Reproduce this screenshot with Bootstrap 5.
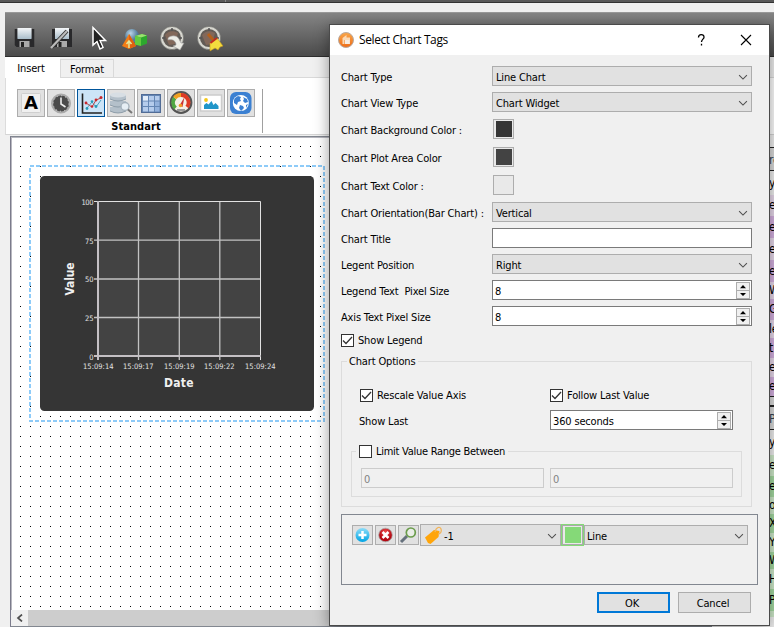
<!DOCTYPE html>
<html lang="en">
<head>
<meta charset="utf-8">
<title>Select Chart Tags</title>
<link href="https://cdn.jsdelivr.net/npm/bootstrap@5.3.0/dist/css/bootstrap.min.css" rel="stylesheet">
<style>
body{width:774px;height:627px;background:#f0f0f0;color:#000;font:11px/14px "DejaVu Sans Condensed","DejaVu Sans",sans-serif;font-stretch:condensed;letter-spacing:-.16px}
svg{display:block;flex:none}
.topstrip{height:3px;background:#595959;border-bottom:1px solid #333}
.topstrip i{width:1px;height:2px;margin-left:225px;background:#888}
.toolbar{height:45px;margin:9px 0 0 5px;background:linear-gradient(#858585,#4b4b4b);border-top:1px solid #999;border-bottom:1px solid #2e2e2e}
.toolbar svg{margin-top:1px}
.tabs{height:21px;margin-left:5px;border-bottom:1px solid #d9d9d9}
.tab-a{width:55px;height:21px;background:#fff;border:1px solid #fff;border-bottom:0;padding:4px 3px 0 0}
.tab-b{width:54px;height:19px;margin-top:2px;border:1px solid #d9d9d9;border-bottom:0;padding-top:3px}
.ribbon{height:57px;margin-left:5px;background:#fff;border-left:1px solid #dcdcdc;border-bottom:1px solid #d5d5d5}
.group{width:257px;height:44px;margin-top:11px;padding-left:11px;border-right:1px solid #a0a0a0}
.tool{width:28px;height:28px;background:#e1e1e1;border:1px solid #adadad}
.tool.on{background:#cce4f7;border-color:#00559b}
.caption{width:238px;height:14px;padding-top:3px;font-size:11px;letter-spacing:.08px}
.workspace{height:491px;margin-top:1px}
.canvas{width:702px;height:491px;margin-left:10px;border:1px solid #828790;border-left-color:#7b7b8b;background:#fff;box-shadow:inset 1px 1px #b8b8c0}
.sheet{height:472px;margin:1px 0 0 1px}
.hscroll{height:16px;background:#cdcdcd}
.hscroll span{width:17px;height:16px;background:#f0f0f0}
.props{width:20px;margin:11px 0 0 44px;font-size:12px}
.props div{padding-left:13px;overflow:hidden;white-space:nowrap}
.hd{background:#dcdcdc;border:1px solid #222;border-width:1px 0;color:#345}
.l1{background:#e8d9ec}.l2{background:#d5b1e1}.g1{background:#cfebcb}.g2{background:#a5dba2}
.dlg{left:329px;top:24px;width:441px;height:602px;background:#f0f0f0;border:1px solid #4a4a4a;box-shadow:0 3px 14px rgba(0,0,0,.4);padding:0}
.titlebar{height:30px;background:#fff;font:12px/16px "Open Sans","Noto Sans",sans-serif;letter-spacing:-.4px;padding-left:8px}
.titlebar .name{padding-left:5px}
.form{padding:11px 0 0 11px}
.fr{height:20px;margin-bottom:6px}
.fr.c{margin-bottom:8px}
.fr>label{width:151px;white-space:pre;padding-top:4px}
.combo,.spin,.edit{width:260px;height:20px;border:1px solid #adadad;background:#e1e1e1;padding:4px 0 0 3px}
.combo>svg:last-child{margin:-2px 3px 0 0}
.spin,.edit{background:#fff;border-color:#7a7a7a;padding-left:2px}
.off{background:#f0f0f0;border-color:#ccc;color:#838383;width:183px}
.sp{width:14px;height:17px;margin:-4px 1px 0 0;border:1px solid #adadad;background:#f0f0f0}
.sw{width:21px;height:20px;border:1px solid #adadad;background:#e9e9e9;margin-left:1px}
.sw i{width:16px;height:16px}
.k1{background:#353535}.k2{background:#434343}.k3{background:#e9e9e9}.k4{background:#85d978}
.cb{width:13px;height:13px;border:1px solid #333;background:#fff;flex:none}
.cb+span{margin-left:4px;padding-top:1px}
.legendrow{height:13px;margin-top:8px}
.crow{height:13px}
.opts{width:411px;height:146px;margin-top:14px;border:1px solid #dcdcdc}
.opts>.lg,.lim>.lg{background:#f0f0f0;width:max-content}
.opts>.lg{margin:-7px 0 0 5px;padding:0 3px 0 2px;height:14px}
.half{width:190px}
.lim{width:391px;height:46px;margin:21px 0 0 9px;border:1px solid #dcdcdc;letter-spacing:-.27px}
.lim>.lg{margin:-7px 0 0 4px;padding:0 3px;height:13px}
.tags{width:417px;height:71px;margin-top:7px;border:1px solid #828790;padding:9px 0 0 10px}
.tb{width:21px;height:20px;border:1px solid #adadad;background:#e1e1e1;margin:1px 2px 0 0}
.cbtn{width:23px;height:22px;border:1px solid #85d978;background:#e9e9e9;box-shadow:inset 0 0 0 1px #aaa}
.foot{margin:7px 18px 0 0;gap:8px}
.foot .btn{width:73px;height:21px;padding:2px 3px 0 0;font:inherit;letter-spacing:inherit;border:1px solid #adadad;background:#e1e1e1;border-radius:0;color:#000}
.foot .ok{border:2px solid #0078d7}
svg text{font-family:"DejaVu Sans Condensed","DejaVu Sans",sans-serif;font-stretch:condensed;letter-spacing:0}
</style>
<script src="https://cdn.jsdelivr.net/npm/bootstrap@5.3.0/dist/js/bootstrap.bundle.min.js"></script>
</head>
<body class="overflow-hidden position-relative">
<svg width="0" height="0" class="position-absolute">
<defs>
<linearGradient id="gm" x2="0" y2="1"><stop stop-color="#f4f6f8"/><stop offset="1" stop-color="#a9bdca"/></linearGradient>
<linearGradient id="gb" x2="0" y2="1"><stop stop-color="#8cdcf8"/><stop offset="1" stop-color="#00a4e4"/></linearGradient>
<linearGradient id="go" x2="0" y2="1"><stop stop-color="#f9a74a"/><stop offset="1" stop-color="#ee6c18"/></linearGradient>
<radialGradient id="gs" cx=".4" cy=".3"><stop stop-color="#b9d4e6"/><stop offset="1" stop-color="#527d9c"/></radialGradient>
<radialGradient id="gr" cx=".5" cy=".3"><stop stop-color="#f05050"/><stop offset="1" stop-color="#b40812"/></radialGradient>
<pattern id="dots" width="10" height="10" patternUnits="userSpaceOnUse" x="20" y="146"><rect width="1" height="1"/></pattern>
<symbol id="chev" viewBox="0 0 11 7"><path d="M1.2 1 5.5 5.2 9.8 1" fill="none" stroke="#505050" stroke-width="1.2"/></symbol>
<symbol id="tick" viewBox="0 0 11 11"><path d="M1 5.5 4 8.5 10 2" fill="none" stroke="#333" stroke-width="1.3"/></symbol>
<symbol id="updn" viewBox="0 0 12 15"><path d="M0 7.5H12" stroke="#adadad"/><path d="M3 5.2h6L6 2zM3 10h6L6 13z"/></symbol>
<symbol id="disk" viewBox="0 0 20 21"><path d="M0 2h3v9h14V2h3v18H2l-2-2z" fill="#29292b"/><path d="M3 1h14v11H3z" fill="url(#gm)"/><path d="M5 14h10v6H5z" fill="#aaa"/><path d="M6.500 15h3v5h-3z" fill="#222"/></symbol>
<symbol id="ring" viewBox="0 0 26 26"><circle cx="12" cy="12" r="10.300" fill="#625b55" stroke="#d7d7d0" stroke-width="2.500"/><circle cx="12" cy="12" r="11.600" fill="none" stroke="#73736f" stroke-width=".7"/><path d="M5 9c3-4 8-5 13-2l-3 11-6 1z" fill="#82685a"/><path d="M12 2v3M2 12h3M19 12h3" stroke="#555" stroke-width="1.500"/></symbol>
</defs></svg>

<div class="topstrip d-flex"><i></i></div>
<div class="toolbar d-flex">
 <svg width="300" height="42" viewBox="5 14 300 42">
  <use href="#disk" x="14.500" y="27" width="20" height="21"/>
  <use href="#disk" x="52" y="27" width="20" height="21"/>
  <path d="M52 47 67 31" stroke="#333" stroke-width="4"/><path d="M51 48 67 31" stroke="#bbb" stroke-width="2.200"/>
  <path d="M93 27.500v17.500l4-3.500 3 7.500 3-1.500-3-7h5.500z" fill="#222" stroke="#fff" stroke-width="1.500"/><path d="M94 30v13l3.500-3 3.500 7.500 1-.5-3.500-7.500h4z" fill="#222"/>
  <circle cx="132" cy="36" r="7" fill="url(#gs)"/><path d="m122 46 7-12 7 12-7 3z" fill="#f27d16"/><path d="m129 34 7 12-7 3z" fill="#e0600f"/><path d="M129 41v7m-2.500-4 2.500-3 2.500 3" stroke="#e4e79a" stroke-width="1.500" fill="none"/>
  <path d="m135 36 7-2 5 1.500v8l-6 2.500-6-1.500z" fill="#2da82e"/><path d="m135 36 7-2 5 1.500-6 2z" fill="#9be26f"/><path d="m135 36 6 1.500v8.500l-6-1.500z" fill="#63cb3e"/>
  <use href="#ring" x="160" y="26" width="26" height="26"/>
  <path d="M168 38c3-3 9-3 11 1l2 4h3l-4 7-7-4 3-1c0-4-3-6-8-5z" fill="#ecece6" stroke="#999" stroke-width=".6"/>
  <use href="#ring" x="197" y="26" width="26" height="26"/>
  <path d="m208 34 6 7" stroke="#b4601c" stroke-width="3"/><path d="m210 43 7-5 6 8-3 1-2 3-3-2-5 3z" fill="#f3dc3e" stroke="#c7971a" stroke-width=".6"/><path d="m210.500 43 6.500-5" stroke="#c22b20" stroke-width="1.800"/>
 </svg>
</div>
<div class="tabs d-flex"><div class="tab-a text-center">Insert</div><div class="tab-b text-center">Format</div></div>
<div class="ribbon d-flex">
 <div class="group">
  <div class="d-flex" style="gap:2px">
   <span class="tool d-flex align-items-center justify-content-center"><svg width="24" height="24"><rect x="2.500" y="2.500" width="19" height="19" rx="1" fill="#f0f0f0" stroke="#cfcfcf"/><text x="5" y="18" font-size="17" font-weight="bold" textLength="14" lengthAdjust="spacingAndGlyphs" style="font-family:'DejaVu Sans'">A</text></svg></span>
   <span class="tool d-flex align-items-center justify-content-center"><svg width="24" height="24"><circle cx="12" cy="12.500" r="9" fill="#4b4b4b" stroke="#aaa" stroke-width="2"/><circle cx="12" cy="12.500" r="7.800" fill="none" stroke="#ddd" stroke-dasharray="1 3.080"/><path d="M12 6.500V13l4.500 3" fill="none" stroke="#eee" stroke-width="1.600"/></svg></span>
   <span class="tool on d-flex align-items-center justify-content-center"><svg width="24" height="24"><path d="M3.500 2.500v19.500H23" fill="none" stroke="#222" stroke-width="1.600"/><path d="m8 17 5-6 4 5 5-7" fill="none" stroke="#48a4c0" stroke-width="1"/><path d="m7 12 6 4 4-7 5-2" fill="none" stroke="#b64a4e" stroke-width="1"/><g fill="#279bb8"><circle cx="8" cy="17.500" r="1.400"/><circle cx="17" cy="15.500" r="1.400"/><circle cx="13" cy="10.500" r="1.300"/></g><g fill="#c8282c"><circle cx="7" cy="12" r="1.400"/><circle cx="13" cy="15.500" r="1.300"/><circle cx="17" cy="9" r="1.400"/><circle cx="22" cy="6.500" r="1.500"/></g></svg></span>
   <span class="tool d-flex align-items-center justify-content-center"><svg width="26" height="26"><g fill="#b4c0ca"><path d="M2 5v4q8 4 16 0V5zM2 11v4q8 4 16 0v-4zM2 17v4q8 4 16 0v-4z"/></g><ellipse cx="10" cy="5" rx="8" ry="2.500" fill="#d7dee4"/><g fill="none" stroke="#7e8f9d" stroke-width=".8"><path d="M2 9q8 4 16 0M2 15q8 4 16 0M2 21q8 4 16 0"/></g><circle cx="17" cy="16.500" r="4" fill="#e6eef4" stroke="#a5b2bc" stroke-width="1.400"/><path d="m20 19.500 4 3.500" stroke="#777" stroke-width="2"/></svg></span>
   <span class="tool d-flex align-items-center justify-content-center"><svg width="24" height="24"><rect x="2.500" y="3.500" width="19" height="18" fill="#6486b4" stroke="#516c96"/><g fill="#b5ccec"><path d="M4 5h5v4.500H4zM10 5h5v4.500h-5zM16 5h4.500v4.500H16zM4 10.500h5v4.500H4zM10 10.500h5v4.500h-5zM4 16h5v4.500H4zM10 16h5v4.500h-5z"/></g><path d="M16 10.500h4.500V15H16zM16 16h4.500v4.500H16z" fill="#93b2dd"/><path d="M4 5h5v4.500H4z" fill="#e4eefa"/></svg></span>
   <span class="tool d-flex align-items-center justify-content-center"><svg width="26" height="26"><circle cx="13" cy="12.500" r="10.300" fill="#f4f0e6" stroke="#545454" stroke-width="2.200"/><path d="M7.500 18a7.500 7.500 0 0 1-.8-10" fill="none" stroke="#51a743" stroke-width="3.800"/><path d="M6.700 8a7.500 7.500 0 0 1 6.300-3" fill="none" stroke="#f0a020" stroke-width="3.800"/><path d="M13 5a7.500 7.500 0 0 1 6 12" fill="none" stroke="#dd3a24" stroke-width="3.800"/><path d="m11.500 15.500 5-8.500-2 10z" fill="#c33"/><circle cx="12.500" cy="15.500" r="1.800" fill="#f29b24"/><path d="M9 20h8" stroke="#999" stroke-width="2"/></svg></span>
   <span class="tool d-flex align-items-center justify-content-center"><svg width="24" height="24"><rect x="1.500" y="4" width="21" height="16" fill="#fff" stroke="#ccc" stroke-width="1.500"/><path d="M5 18v-4l2.500-2 2 1.500 3-3.500 2 4 2-2 3 3v3z" fill="#2196c9"/><circle cx="7" cy="9" r="1.900" fill="#f4c719"/></svg></span>
   <span class="tool d-flex align-items-center justify-content-center"><svg width="24" height="24"><rect x="1" y="1" width="21.500" height="22" rx="6" fill="#3b80d2"/><circle cx="11.800" cy="12" r="8" fill="#fff"/><path d="m6 7 3-2 3 1-1 2 1 2-3 1-1 3-3-2v-3zM14 6l4 2 1 3-3 1-2-2 1-2zM11 14l3 1 1 2-3 3-2-3zM17 14l2-1-2 4z" fill="#3b80d2"/></svg></span>
  </div>
  <div class="caption fw-bold text-center">Standart</div>
 </div>
</div>
<div class="workspace d-flex">
 <div class="canvas flex-shrink-0">
  <div class="sheet">
   <svg width="699" height="471" viewBox="12 138 699 471">
    <rect x="20" y="146" width="691" height="463" fill="url(#dots)"/>
    <rect x="30" y="166" width="294" height="255" fill="none" stroke="#8ecbf8" stroke-width="2" stroke-dasharray="4 2"/>
    <rect x="40" y="176" width="274" height="235" rx="4.500" fill="#353535"/>
    <rect x="98" y="201" width="163" height="155" fill="#434343"/>
    <g fill="none" stroke="#c2c2c2" stroke-width="1.300"><path d="M94 240.200H261M94 279H261M94 317.500H261M138.500 201V360M179.300 201V360M219.800 201V360"/></g>
    <path d="M94 201.500H260.500V360" fill="none" stroke="#e2e2e2"/><path d="M98 201v159M94 356H261" stroke="#c4c0c4" stroke-width="2"/>
    <g fill="#e2e2e2" font-size="7.500" text-anchor="end"><text x="93.500" y="205" textLength="12">100</text><text x="93.500" y="244">75</text><text x="93.500" y="282">50</text><text x="93.500" y="321">25</text><text x="93.500" y="360">0</text></g>
    <g fill="#e2e2e2" font-size="7.500"><text x="83" y="369" textLength="30.500">15:09:14</text><text x="123" y="369" textLength="30.500">15:09:17</text><text x="164" y="369" textLength="30.500">15:09:19</text><text x="204" y="369" textLength="30.500">15:09:22</text><text x="245" y="369" textLength="30.500">15:09:24</text></g>
    <g fill="#f0f0f0" font-size="12" font-weight="bold"><text x="164" y="387" textLength="29.500">Date</text><text transform="translate(74 295.500) rotate(-90)" textLength="33">Value</text></g>
   </svg>
  </div>
  <div class="hscroll"><span class="d-flex align-items-center justify-content-center"><svg width="8" height="8"><path d="M6 .5 2 4l4 3.500" fill="none" stroke="#505050" stroke-width="1.700"/></svg></span></div>
 </div>
 <div class="props flex-shrink-0" id="props"></div>
</div>

<div class="dlg position-absolute">
 <div class="titlebar d-flex align-items-center">
  <svg width="16" height="16"><circle cx="8" cy="8" r="7.500" fill="url(#go)" stroke="#b9aaa0"/><path d="M4.500 12V6l4-3v2.500h3.500V12h-2V8H6.500v4z" fill="#fbd9b4"/><path d="M7 8h4.500v4H7z" fill="#f6ece2"/></svg>
  <span class="name flex-grow-1">Select Chart Tags</span>
  <svg width="12" height="14" style="margin-right:32px"><path d="M2.500 4.500C2.500 2.500 3.500 1.600 5.200 1.600S8 2.600 8 4.200C8 6 5.500 6.500 5.500 9M5.500 10.800v1.700" fill="none" stroke="#000" stroke-width="1.300"/></svg>
  <svg width="12" height="12" style="margin-right:17px"><path d="m1 1 10 10M11 1 1 11" stroke="#000" stroke-width="1.100"/></svg>
 </div>
 <div class="form">
  <div class="fr d-flex align-items-center"><label>Chart Type</label><div class="combo d-flex align-items-center justify-content-between">Line Chart<svg width="10" height="7"><use href="#chev"/></svg></div></div>
  <div class="fr d-flex align-items-center" style="margin-bottom:7px"><label>Chart View Type</label><div class="combo d-flex align-items-center justify-content-between">Chart Widget<svg width="10" height="7"><use href="#chev"/></svg></div></div>
  <div class="fr c d-flex align-items-center"><label>Chart Background Color :</label><div class="sw d-flex align-items-center justify-content-center"><i class="k1"></i></div></div>
  <div class="fr c d-flex align-items-center"><label>Chart Plot Area Color</label><div class="sw d-flex align-items-center justify-content-center"><i class="k2"></i></div></div>
  <div class="fr c d-flex align-items-center" style="margin-bottom:7px"><label>Chart Text Color :</label><div class="sw d-flex align-items-center justify-content-center"><i class="k3"></i></div></div>
  <div class="fr d-flex align-items-center"><label>Chart Orientation(Bar Chart) :</label><div class="combo d-flex align-items-center justify-content-between">Vertical<svg width="10" height="7"><use href="#chev"/></svg></div></div>
  <div class="fr d-flex align-items-center"><label>Chart Title</label><div class="edit"></div></div>
  <div class="fr d-flex align-items-center"><label>Legent Position</label><div class="combo d-flex align-items-center justify-content-between">Right<svg width="10" height="7"><use href="#chev"/></svg></div></div>
  <div class="fr d-flex align-items-center"><label>Legend Text  Pixel Size</label><div class="spin d-flex align-items-center justify-content-between">8<span class="sp"><svg width="12" height="15"><use href="#updn"/></svg></span></div></div>
  <div class="fr d-flex align-items-center"><label>Axis Text Pixel Size</label><div class="spin d-flex align-items-center justify-content-between">8<span class="sp"><svg width="12" height="15"><use href="#updn"/></svg></span></div></div>
  <div class="legendrow d-flex align-items-center"><span class="cb"><svg width="11" height="11"><use href="#tick"/></svg></span><span>Show Legend</span></div>
  <div class="opts">
   <div class="lg">Chart Options</div>
   <div class="crow d-flex" style="margin:20px 0 0 18px">
    <div class="half d-flex align-items-center"><span class="cb"><svg width="11" height="11"><use href="#tick"/></svg></span><span>Rescale Value Axis</span></div>
    <div class="half d-flex align-items-center"><span class="cb"><svg width="11" height="11"><use href="#tick"/></svg></span><span>Follow Last Value</span></div>
   </div>
   <div class="d-flex align-items-center" style="margin:8px 0 0 17px">
    <span style="width:191px;padding-top:4px">Show Last</span><div class="spin d-flex align-items-center justify-content-between" style="width:183px">360 seconds<span class="sp"><svg width="12" height="15"><use href="#updn"/></svg></span></div>
   </div>
   <div class="lim">
    <div class="lg d-flex align-items-center"><span class="cb"></span><span>Limit Value Range Between</span></div>
    <div class="d-flex" style="margin:10px 0 0 9px;gap:6px"><div class="edit off d-flex align-items-center">0</div><div class="edit off d-flex align-items-center">0</div></div>
   </div>
  </div>
  <div class="tags d-flex align-items-start">
   <span class="tb"><svg width="19" height="18"><circle cx="9.500" cy="9" r="7" fill="url(#gb)"/><path d="M9.500 5v8M5.500 9h8" stroke="#fff" stroke-width="2.500"/></svg></span>
   <span class="tb"><svg width="19" height="18"><circle cx="9.500" cy="9" r="6.800" fill="url(#gr)" stroke="#aaa" stroke-width=".8"/><path d="m6.500 6 6 6m0-6-6 6" stroke="#fff" stroke-width="2.500"/></svg></span>
   <span class="tb" style="margin-right:1px"><svg width="19" height="18"><path d="m2 16 6-6" stroke="#66717d" stroke-width="3"/><circle cx="11.800" cy="6.500" r="4.500" fill="#e9ede6" stroke="#6a9c4b" stroke-width="1.700"/></svg></span>
   <div class="combo d-flex align-items-center" style="width:141px;height:22px"><svg width="18" height="20" style="margin:-4px 2px 0 0"><path d="M1 12.500 10 5l5.500 1-1 6-8 7-2.500-1z" fill="#ffa50a"/><path d="M11 7c1-5 5-6 6-3s-1 5-3 5" fill="none" stroke="#f2b55c" stroke-width="1.300"/></svg><span class="flex-grow-1">-1</span><svg width="10" height="7"><use href="#chev"/></svg></div>
   <span class="cbtn d-flex align-items-center justify-content-center"><i class="k4 d-block" style="width:16px;height:16px"></i></span>
   <div class="combo d-flex align-items-center justify-content-between" style="width:164px;margin-top:1px;padding-left:2px">Line<svg width="10" height="7"><use href="#chev"/></svg></div>
  </div>
  <div class="foot d-flex justify-content-end"><button class="btn ok">OK</button><button class="btn">Cancel</button></div>
 </div>
</div>
<script>
// property rows: [height, style, visible label]
const rows=[[24,'hd','re'],[24,'','y'],[21,'l1','e'],[22,'l2','e'],[22,'l1','e'],[22,'l2','e'],[17,'l1','W'],[21,'l2','G'],[18,'l1','le'],[20,'l2','t'],[19,'l1','e'],[19,'l2','e'],[10,'hd',''],[24,'hd','P'],[25,'','y'],[21,'g1','e'],[21,'g2','e'],[17,'g1','or'],[19,'g2','X'],[19,'g1','Y'],[17,'g2','W'],[20,'g1','H'],[22,'g2','P'],[6,'g1','']];
document.getElementById('props').innerHTML=rows.map(([h,c,t])=>`<div class="${c}" style="height:${h}px;line-height:${h}px">${t}</div>`).join('');
</script>
</body>
</html>
